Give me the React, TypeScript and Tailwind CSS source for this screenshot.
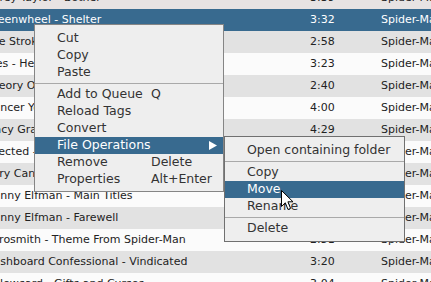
import React from "react";

const rows: { t: string; d: string; bg: string; sel?: boolean }[] = [
  { t: "Corey Taylor - Bother", d: "3:39", bg: "bg-[#e7e3e3]" },
  { t: "Greenwheel - Shelter", d: "3:32", bg: "bg-[#386a8f]", sel: true },
  { t: "The Strokes - Hard to Explain", d: "2:58", bg: "bg-[#e2e2e2]" },
  { t: "Pres - Hero", d: "3:23", bg: "bg-[#fbfbfb]" },
  { t: "Theory Of A Deadman - Invisible Man", d: "2:40", bg: "bg-[#e2e2e2]" },
  { t: "Dancer Yours", d: "4:00", bg: "bg-[#fbfbfb]" },
  { t: "Macy Gray - My Nutmeg Phantasy", d: "4:29", bg: "bg-[#e2e2e2]" },
  { t: "Injected - Bullet Proof Skin", d: "3:37", bg: "bg-[#fbfbfb]" },
  { t: "Jerry Cantrell - She Was My Girl", d: "3:42", bg: "bg-[#e2e2e2]" },
  { t: "Danny Elfman - Main Titles", d: "3:16", bg: "bg-[#fbfbfb]" },
  { t: "Danny Elfman - Farewell", d: "3:40", bg: "bg-[#e2e2e2]" },
  { t: "Aerosmith - Theme From Spider-Man", d: "2:51", bg: "bg-[#fbfbfb]" },
  { t: "Dashboard Confessional - Vindicated", d: "3:20", bg: "bg-[#e2e2e2]" },
  { t: "Yellowcard - Gifts and Curses", d: "3:04", bg: "bg-[#fbfbfb]" },
];

function Item({
  label,
  shortcut,
  active,
  arrow,
}: {
  label: string;
  shortcut?: string;
  active?: boolean;
  arrow?: boolean;
}) {
  return (
    <div
      className={`flex h-[17px] items-center pl-[22px] pr-[6px] ${
        active ? "bg-[#386a8f] text-white" : "text-[#333333]"
      }`}
    >
      <span className="w-[94px] shrink-0 whitespace-nowrap">{label}</span>
      <span className="flex-1 whitespace-nowrap">{shortcut}</span>
      {arrow && (
        <svg width="8" height="9" viewBox="0 0 8 9" className="shrink-0">
          <path d="M0 0 L8 4.5 L0 9 Z" fill="#ffffff" />
        </svg>
      )}
    </div>
  );
}

function Sep() {
  return (
    <div className="flex h-[5px] items-center">
      <div className="h-px w-full bg-[#a9a9a9]" />
    </div>
  );
}

export default function App() {
  return (
    <div
      className="relative h-[282px] w-[431px] overflow-hidden bg-white"
      style={{ fontFamily: '"DejaVu Sans", sans-serif' }}
    >
      <div className="-mt-[13px] flex flex-col">
        {rows.map((r, i) => (
          <div
            key={i}
            className={`flex h-[22px] items-center text-[11px] ${r.bg} ${
              r.sel ? "text-white" : "text-[#222222]"
            }`}
          >
            <div className="w-[310px] shrink-0 overflow-hidden">
              <span className="-ml-[15px] block whitespace-nowrap">{r.t}</span>
            </div>
            <div className="w-[71px] shrink-0 whitespace-nowrap">{r.d}</div>
            <div className="whitespace-nowrap">Spider-Man</div>
          </div>
        ))}
      </div>

      {/* main context menu */}
      <div className="absolute left-[34px] top-[24px] w-[190px] border border-[#858585] bg-[#eeeeee] pt-[5px] pb-[3px] text-[12.5px]">
        <Item label="Cut" />
        <Item label="Copy" />
        <Item label="Paste" />
        <Sep />
        <Item label="Add to Queue" shortcut="Q" />
        <Item label="Reload Tags" />
        <Item label="Convert" />
        <Item label="File Operations" active arrow />
        <Item label="Remove" shortcut="Delete" />
        <Item label="Properties" shortcut="Alt+Enter" />
      </div>

      {/* submenu */}
      <div className="absolute left-[224px] top-[136px] w-[181px] border border-[#707070] bg-[#eeeeee] pt-[5px] pb-[4px] text-[12.5px]">
        <Item label="Open containing folder" />
        <Sep />
        <Item label="Copy" />
        <Item label="Move" active />
        <Item label="Rename" />
        <Sep />
        <Item label="Delete" />
      </div>

      {/* mouse cursor */}
      <svg
        className="absolute left-[281px] top-[190px]"
        width="13"
        height="21"
        viewBox="0 0 13 21"
      >
        <path
          d="M0.5 0.5 L0.5 16.5 L4.3 12.8 L7 19.5 L9.6 18.4 L6.9 11.8 L12 11.8 Z"
          fill="#ffffff"
          stroke="#000000"
          strokeWidth="1"
          strokeLinejoin="round"
        />
      </svg>
    </div>
  );
}
